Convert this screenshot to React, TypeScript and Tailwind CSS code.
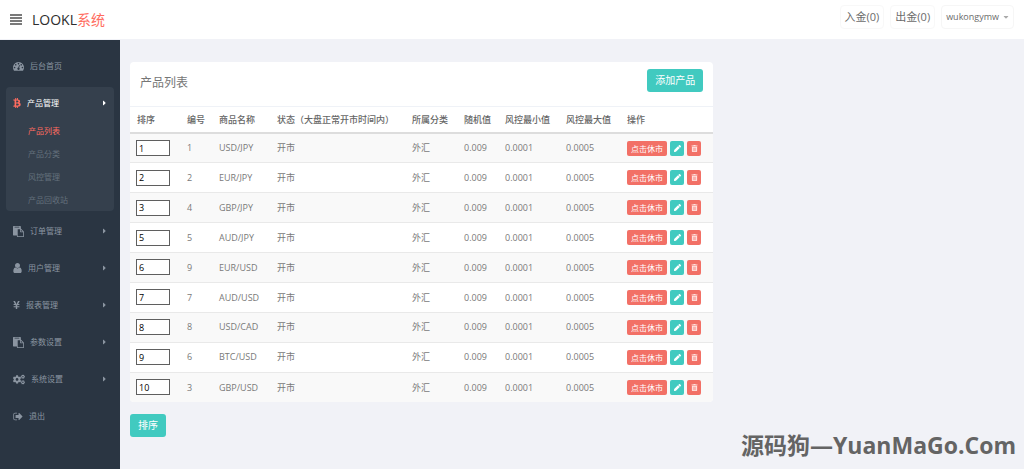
import { ReactNode, useState } from 'react';
import {
  FaBtc,
  FaCaretDown,
  FaCaretRight,
  FaCogs,
  FaPen,
  FaTrashAlt,
  FaYenSign
} from 'react-icons/fa';

interface Product {
  sort: number;
  id: number;
  name: string;
}

interface MenuItem {
  label: string;
  icon: ReactNode;
  arrow?: boolean;
  children?: string[];
}

const products: Product[] = [
  { sort: 1, id: 1, name: 'USD/JPY' },
  { sort: 2, id: 2, name: 'EUR/JPY' },
  { sort: 3, id: 4, name: 'GBP/JPY' },
  { sort: 5, id: 5, name: 'AUD/JPY' },
  { sort: 6, id: 9, name: 'EUR/USD' },
  { sort: 7, id: 7, name: 'AUD/USD' },
  { sort: 8, id: 8, name: 'USD/CAD' },
  { sort: 9, id: 6, name: 'BTC/USD' },
  { sort: 10, id: 3, name: 'GBP/USD' }
];

const BarsIcon = () => (
  <svg viewBox="0 0 12 11" fill="currentColor" className="w-3 h-[11px]">
    <path d="M0 0h12v2H0zM0 3h12v2H0zM0 6h12v2H0zM0 9h12v2H0z" />
  </svg>
);

const DashboardIcon = () => (
  <svg viewBox="0 128 1792 1536" fill="currentColor" className="w-[11px] h-[10px]">
    <path d="M384 1152q0-53-37.5-90.5t-90.5-37.5-90.5 37.5-37.5 90.5 37.5 90.5 90.5 37.5 90.5-37.5 37.5-90.5zm192-448q0-53-37.5-90.5t-90.5-37.5-90.5 37.5-37.5 90.5 37.5 90.5 90.5 37.5 90.5-37.5 37.5-90.5zm428 481l101-382q6-26-7.5-48.5t-38.5-29.5-48 6.5-30 39.5l-101 382q-60 5-107 43.5t-63 98.5q-20 77 20 146t117 89 146-20 89-117q16-60-6-117t-72-91zm660-33q0-53-37.5-90.5t-90.5-37.5-90.5 37.5-37.5 90.5 37.5 90.5 90.5 37.5 90.5-37.5 37.5-90.5zm-640-640q0-53-37.5-90.5t-90.5-37.5-90.5 37.5-37.5 90.5 37.5 90.5 90.5 37.5 90.5-37.5 37.5-90.5zm448 192q0-53-37.5-90.5t-90.5-37.5-90.5 37.5-37.5 90.5 37.5 90.5 90.5 37.5 90.5-37.5 37.5-90.5zm320 448q0 261-141 483-19 29-54 29h-1402q-35 0-54-29-141-221-141-483 0-182 71-348t191-286 286-191 348-71 348 71 286 191 191 286 71 348z" />
  </svg>
);

const PasteIcon = () => (
  <svg viewBox="0 0 1792 1792" fill="currentColor" className="w-[11px] h-[11px]">
    <path d="M768 1664h896v-640h-416q-40 0-68-28t-28-68v-416h-384v1152zm256-1440v-64q0-13-9.5-22.5t-22.5-9.5h-704q-13 0-22.5 9.5t-9.5 22.5v64q0 13 9.5 22.5t22.5 9.5h704q13 0 22.5-9.5t9.5-22.5zm256 672h299l-299-299v299zm512 128v672q0 40-28 68t-68 28h-960q-40 0-68-28t-28-68v-160h-544q-40 0-68-28t-28-68v-1344q0-40 28-68t68-28h1088q40 0 68 28t28 68v328q21 13 36 28l408 408q28 28 48 76t20 88z" />
  </svg>
);

const UserIcon = () => (
  <svg viewBox="256 128 1280 1536" fill="currentColor" className="w-[9px] h-[10px]">
    <path d="M1536 1399q0 109-62.5 187t-150.5 78h-854q-88 0-150.5-78t-62.5-187q0-85 8.5-160.5t31.5-152 58.5-131 94-89 134.5-34.5q131 128 313 128t313-128q76 0 134.5 34.5t94 89 58.5 131 31.5 152 8.5 160.5zm-256-887q0 159-112.5 271.5t-271.5 112.5-271.5-112.5-112.5-271.5 112.5-271.5 271.5-112.5 271.5 112.5 112.5 271.5z" />
  </svg>
);

const SignOutIcon = () => (
  <svg viewBox="64 128 1600 1536" fill="currentColor" className="w-[10px] h-[9px]">
    <path d="M704 1440q0 4 1 20t.5 26.5-3 23.5-10 19.5-20.5 6.5h-320q-119 0-203.5-84.5t-84.5-203.5v-704q0-119 84.5-203.5t203.5-84.5h320q13 0 22.5 9.5t9.5 22.5q0 4 1 20t.5 26.5-3 23.5-10 19.5-20.5 6.5h-320q-66 0-113 47t-47 113v704q0 66 47 113t113 47h312l11.5 1 11.5 3 8 5.5 7 9 2 13.5zm928-544q0 26-19 45l-544 544q-19 19-45 19t-45-19-19-45v-288h-448q-26 0-45-19t-19-45v-384q0-26 19-45t45-19h448v-288q0-26 19-45t45-19 45 19l544 544q19 19 19 45z" />
  </svg>
);

const menu: MenuItem[] = [
  { label: '后台首页', icon: <DashboardIcon /> },
  {
    label: '产品管理',
    icon: <FaBtc className="w-2 h-[10px] text-[#ff6c60]" />,
    arrow: true,
    children: ['产品列表', '产品分类', '风控管理', '产品回收站']
  },
  { label: '订单管理', icon: <PasteIcon />, arrow: true },
  { label: '用户管理', icon: <UserIcon />, arrow: true },
  { label: '报表管理', icon: <FaYenSign className="w-[7px] h-[10px]" />, arrow: true },
  { label: '参数设置', icon: <PasteIcon />, arrow: true },
  { label: '系统设置', icon: <FaCogs className="w-[12px] h-[11px]" />, arrow: true },
  { label: '退出', icon: <SignOutIcon /> }
];

function Header() {
  return (
    <header className="h-10 bg-white flex items-center justify-between px-[10px] border-b border-[#f1f2f7]">
      <div className="flex items-center gap-[10px]">
        <button aria-label="菜单" className="text-[#7a7a7a]">
          <BarsIcon />
        </button>
        <a href="#" className="text-[14px] text-[#2e2e2e]">
          LOOKL<span className="text-[#ff6c60]">系统</span>
        </a>
      </div>
      <div className="flex items-center gap-[6px] mb-[6px] text-[#6b6b6b]">
        <a href="#" className="h-6 px-1 text-[11px] leading-[22px] border border-[#f8f8f8] rounded-sm">入金(0)</a>
        <a href="#" className="h-6 px-1 text-[11px] leading-[22px] border border-[#f8f8f8] rounded-sm">出金(0)</a>
        <button className="h-6 px-1 flex items-center gap-1 text-[9px] border border-[#f6f6f6] rounded">
          wukongymw
          <FaCaretDown className="w-[6px] h-2 text-[#aaaaaa]" />
        </button>
      </div>
    </header>
  );
}

function Sidebar() {
  return (
    <aside className="w-[120px] shrink-0 bg-[#2a3542] pt-[10px] px-[6px]">
      <ul className="text-[8px] text-[#8b95a1]">
        {menu.map((item) => (
          <li
            key={item.label}
            className={item.children ? 'mb-1 rounded bg-[#35404d]' : 'mb-[5px]'}
          >
            <a
              href="#"
              className={`h-8 px-[7px] flex items-center gap-[6px] ${item.children ? 'text-white' : ''}`}
            >
              {item.icon}
              <span className="flex-1">{item.label}</span>
              {item.arrow && <FaCaretRight className="w-[5px] h-2" />}
            </a>
            {item.children && (
              <ul>
                {item.children.map((child, index) => (
                  <li key={child}>
                    <a
                      href="#"
                      className={`h-[23px] pl-[22px] flex items-center ${index === 0 ? 'text-[#ff6c60]' : 'text-[#64707c]'}`}
                    >
                      {child}
                    </a>
                  </li>
                ))}
              </ul>
            )}
          </li>
        ))}
      </ul>
    </aside>
  );
}

function ProductRow({ product }: { product: Product }) {
  const [sort, setSort] = useState(String(product.sort));

  return (
    <tr className="border-t border-[#e9e9e9] odd:bg-[#f9f9f9]">
      <td className="h-[29px] pl-[6px]">
        <input
          type="text"
          aria-label={`${product.name} 排序`}
          value={sort}
          onChange={(e) => setSort(e.target.value)}
          className="block w-[34px] h-4 px-[2px] bg-white border border-[#5f5f5f] text-[9px] leading-3 text-black"
        />
      </td>
      <td className="pl-[7px]">{product.id}</td>
      <td className="pl-[7px]">{product.name}</td>
      <td className="pl-[7px]">开市</td>
      <td className="pl-[7px]">外汇</td>
      <td className="pl-[7px]">0.009</td>
      <td className="pl-[7px]">0.0001</td>
      <td className="pl-[7px]">0.0005</td>
      <td className="pl-[7px]">
        <div className="flex items-center gap-[3px] text-white">
          <button className="h-[15px] px-1 rounded-xs bg-[#f27066] text-[8px] leading-[15px]">点击休市</button>
          <button aria-label="编辑" className="w-[14px] h-[15px] rounded-xs bg-[#41cac0] flex items-center justify-center">
            <FaPen className="w-[7px] h-[7px]" />
          </button>
          <button aria-label="删除" className="w-[14px] h-[15px] rounded-xs bg-[#f27066] flex items-center justify-center">
            <FaTrashAlt className="w-[7px] h-[7px] text-[#ffe3e0]" />
          </button>
        </div>
      </td>
    </tr>
  );
}

function ProductPanel() {
  return (
    <section className="bg-white rounded overflow-hidden">
      <div className="h-[45px] px-[10px] pt-[7px] flex items-start justify-between border-b border-[#eff2f7]">
        <h1 className="text-[12px] leading-[28px] text-[#767676]">产品列表</h1>
        <button className="h-[23px] px-2 rounded-[3px] bg-[#41cac0] text-white text-[10px] leading-[23px]">添加产品</button>
      </div>
      <table className="w-full h-[295px] table-fixed text-[9px] text-[#797979]">
        <thead>
          <tr className="text-left text-[#666666]">
            <th className="w-[50px] h-[26px] pl-[7px] font-medium">排序</th>
            <th className="w-[32px] pl-[7px] font-medium">编号</th>
            <th className="w-[58px] pl-[7px] font-medium">商品名称</th>
            <th className="w-[135px] pl-[7px] font-medium">状态（大盘正常开市时间内）</th>
            <th className="w-[52px] pl-[7px] font-medium">所属分类</th>
            <th className="w-[41px] pl-[7px] font-medium">随机值</th>
            <th className="w-[61px] pl-[7px] font-medium">风控最小值</th>
            <th className="w-[61px] pl-[7px] font-medium">风控最大值</th>
            <th className="pl-[7px] font-medium">操作</th>
          </tr>
        </thead>
        <tbody className="border-t-2 border-[#dddddd]">
          {products.map((product) => (
            <ProductRow key={product.id} product={product} />
          ))}
        </tbody>
      </table>
    </section>
  );
}

export default function App() {
  return (
    <div className="relative min-h-screen flex flex-col bg-[#f1f2f7] font-['Open_Sans','Noto_Sans_CJK_SC',sans-serif]">
      <Header />
      <div className="flex-1 flex">
        <Sidebar />
        <main className="flex-1 px-[10px] pt-[22px]">
          <div className="grid grid-cols-[2fr_1fr] gap-[9px]">
            <div>
              <ProductPanel />
              <button className="mt-3 h-[23px] px-2 rounded-[3px] bg-[#41cac0] text-white text-[10px] leading-[23px]">排序</button>
            </div>
          </div>
        </main>
      </div>
      <p className="absolute right-2 bottom-2 text-[23px] leading-[32px] font-bold text-[#646464]">
        源码狗—YuanMaGo.Com
      </p>
    </div>
  );
}
